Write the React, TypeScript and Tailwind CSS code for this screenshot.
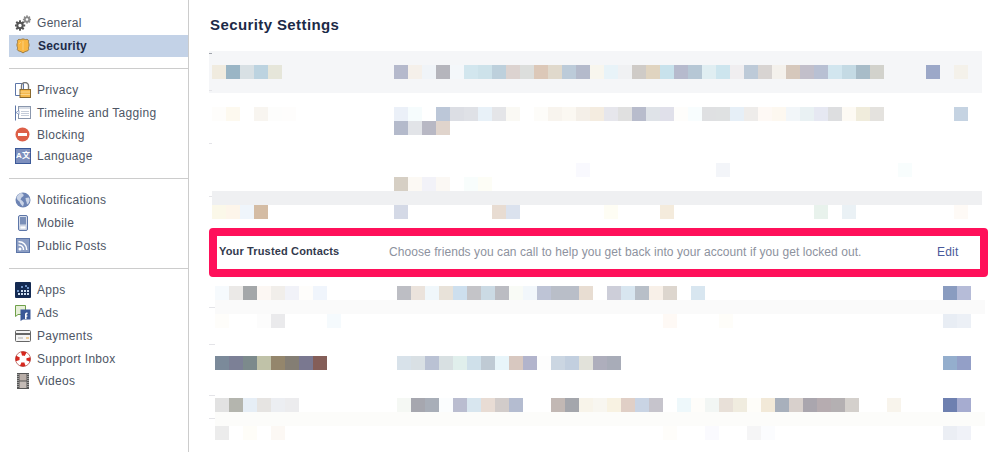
import React from 'react';

const T = '#f5f6f8';

// one 14px mosaic row: colours on the grid, "-" is an empty cell
type Row = { cells?: string; band?: string; tick?: number; tickColor?: string; full?: boolean };

const blanks = (n: number) => Array(n).fill('-').join(' ');

const topRows: Row[] = [
  { band: T, full: true, tick: 2, tickColor: '#a0a4ac' },
  {
    band: T,
    full: true,
    cells:
      'f0ebdf 9ab5c5 d8e0e4 bcd3e0 e6e6da - - - - - - - - b5b9cc f5f0ea f0f4f8 b5b5bc f4f7fa d2e6ee cde2ea bdd0dc dcd3d0 dcdedc dcc8b8 e0d9cc bccbd9 b4bacb f8f6ee e8f3f8 f0f1f3 cfcbc7 e0d4c0 c8e2ec b6bacd b6c7d5 e0eef2 cde5ee f0eef0 bdcad8 d8d4d2 f4f1ec d6c8bc c2bfca b8c0d3 d2e6ef c4dae4 a8bcc8 d2d2cc - - - 9ca8c8 - f4f1ea',
  },
  { band: T, full: true, tick: 11, tickColor: '#e4e4e8' },
  {},
  {
    cells:
      'fefdfb fdf9ef - f8f5f0 fdfdfc fefdfc - - - - - - - ebf0f8 f6fcfd - bcc7d8 dcdee4 dfe1e6 e8f1f8 e4e5e8 faf9f4 - fdfcf9 f8f4ee fbf8f2 f4efe8 f4ece0 e6e6ec e0e0e0 b8bccc dfe3e8 e0e0ea fefdfb f8fdfe dfe0e2 dfe1e2 e6eff7 eeecea fef9f5 fdf8f0 f2f6f9 e9f1f3 e6e8f2 dddee0 fdfaf4 f0ecdc e4e2de - - - - - c5d3e2',
  },
  { cells: `${blanks(13)} b4bacb e2e4e8 b8b8c4 e0d4cc` },
  { tick: 8, tickColor: '#e4e4e8' },
  {},
  { cells: `${blanks(26)} f9f9fe ${blanks(9)} f3f5f9 ${blanks(12)} f8fdfd` },
  { cells: `${blanks(13)} d6cfc4 fcf9f4 f2f2f8 fbf8f4 - f8fdfc fdfdf6` },
  { band: '#eff0f2', tick: 5, tickColor: '#e4e4e8' },
  {
    cells: `fbf8e9 fdf5ea eff5fb d4bca4 ${blanks(9)} d4d9e6 ${blanks(6)} e8dcd2 dbe2ee ${blanks(6)} fefdf4 ${blanks(3)} f4ebdc ${blanks(10)} e8f2ec - eaf1f5 ${blanks(7)} fefaf6`,
  },
];

const bottomRows: Row[] = [
  {
    cells: `f6fafd ebe9e7 a4a7a9 fcf7f3 f1eeea f1f2f8 fefdfb f0f5fc ${blanks(5)} bdbec4 ebe3dc f0f7fb e8e2d9 cddfee c4c4c8 cbdae4 bbbcc2 f9fbf6 f2f7fb bec4d6 b9bec8 b9bec8 e8ddd2 - cdced9 d8e6f0 b8bfc8 f8f0e8 ddd6ce - d8e6f0 ${blanks(17)} 8a9cc0 b6bcd8`,
  },
  { band: '#fafafa', tick: 7, tickColor: '#e4e4e8' },
  {
    cells: `fefdfa - - fcfcfc eaeaec - - - f5fafd ${blanks(23)} fef9f5 ${blanks(3)} fefdf9 ${blanks(15)} e8edf4 ecf0f6`,
  },
  {},
  { tick: 2, tickColor: '#e4e4e8' },
  {
    cells: `7b8a9a 7c8096 7c8a8c c0c2a8 94866c 847e74 7a7890 845e58 ${blanks(5)} d8e2ea d9e0e4 bac2d4 d8e0e2 e0efec cfe0ea bfcad4 e8f5fa d8c8c0 b2b4cc fdfdfd cbd6e2 c2cfdf e2e2da aeaebc a8acb8 ${blanks(23)} 94aecd 939fc7`,
  },
  {},
  { tick: 11, tickColor: '#e4e4e8' },
  {
    cells: `e2e2e2 b4b5ae e6eef6 e6e4e2 eceef2 ececee ${blanks(7)} f5f8f4 a6a7af a8aeb8 fbfdfe babdd0 d8e6ef e8dcd4 d2ccca b4bcd0 - - c2b8b4 a4a6ac f8f4ea f8f6f0 f8f2e2 e0cfc6 c9d4e4 c6c4cc - eef8fb fefdfa f2f6f4 e8e0d8 f0ecdf fefdf9 f2e9d8 a8b0bc d8d0cc aaa6ae b6acb0 b4b0b2 d4d0cc - - f8f4ec ${blanks(3)} 6e80b0 a6acd0`,
  },
  { band: '#fcfcfa', tick: 6, tickColor: '#e4e4e8' },
  {
    cells: `ececec - fefdf8 - fcf8f4 ${blanks(27)} fefdfa - - fafafe - - f5f5f6 fbfcfe ${blanks(12)} ebeef4 f0f2f8`,
  },
  {},
];

const Mosaic = ({ rows, gutter, width }: { rows: Row[]; gutter: number; width: number }) => (
  <div>
    {rows.map((row, i) => (
      <div key={i} className="flex h-[14px]">
        <div className="h-[14px]" style={{ width: gutter, background: row.full ? row.band : undefined }}>
          {row.tick !== undefined && (
            <div className="h-px" style={{ marginTop: row.tick, background: row.tickColor }} />
          )}
        </div>
        <div className="flex h-[14px]" style={{ width, background: row.band }}>
          {row.cells?.split(' ').map((c, j) => (
            <div
              key={j}
              className="h-[14px] w-[14px] shrink-0"
              style={{ background: c === '-' ? undefined : `#${c}` }}
            />
          ))}
        </div>
      </div>
    ))}
  </div>
);

const gearTeeth = (cx: number, cy: number, r: number, n: number) =>
  Array.from({ length: n }, (_, i) => {
    const a = (i / n) * Math.PI * 2;
    return { x: cx + Math.cos(a) * r, y: cy + Math.sin(a) * r, a: (a * 180) / Math.PI };
  });

const Gear = () => (
  <svg viewBox="0 0 16 16" className="h-4 w-4">
    {gearTeeth(5, 10.5, 4.2, 8).map((t, i) => (
      <rect key={i} x={t.x - 1} y={t.y - 1} width="2" height="2" fill="#555" transform={`rotate(${t.a} ${t.x} ${t.y})`} />
    ))}
    <circle cx="5" cy="10.5" r="2.7" fill="none" stroke="#555" strokeWidth="2" />
    {gearTeeth(12, 4.5, 3.3, 8).map((t, i) => (
      <rect key={i} x={t.x - 0.8} y={t.y - 0.8} width="1.6" height="1.6" fill="#8a8a8a" transform={`rotate(${t.a} ${t.x} ${t.y})`} />
    ))}
    <circle cx="12" cy="4.5" r="2.2" fill="none" stroke="#8a8a8a" strokeWidth="1.8" />
  </svg>
);

const Shield = () => (
  <svg viewBox="0 0 16 16" className="h-4 w-4">
    <path
      d="M4 1.2c1 .6 2 .5 3-.2h2c1 .7 2 .8 3 .2l1.800 1.500c-.5 1-.5 1.800 0 2.800.4 1 .4 2 0 3-.5 1-.5 2 0 2.800L12.500 13c-1.600.2-3.200.8-4.500 2-1.300-1.200-2.900-1.800-4.500-2l-1.300-1.700c.5-.8.500-1.800 0-2.800-.4-1-.4-2 0-3 .5-1 .5-1.800 0-2.800z"
      fill="#f9b743"
      stroke="#94743c"
      strokeWidth=".9"
    />
    <path d="M8 3v9M6 4.500c-1 0-1.600.6-1.600 1.500" stroke="#fbd58c" strokeWidth=".8" fill="none" />
  </svg>
);

const Lock = () => (
  <svg viewBox="0 0 16 16" className="h-4 w-4">
    <path d="M.5 1.500h8v12h-8z" fill="#fff" stroke="#5d76a8" />
    <path d="M6.500 8V4a3.500 3.500 0 0 1 7 0v4" fill="none" stroke="#777" strokeWidth="1.4" />
    <rect x="5" y="7.5" width="10.500" height="8" fill="#f5b94e" stroke="#8a6a30" />
    <path d="M5.500 10h9.500M5.500 12.500h9.500" stroke="#fbd78e" />
  </svg>
);

const Timeline = () => (
  <svg viewBox="0 0 16 16" className="h-4 w-4">
    <path d="M.5 .5v15" stroke="#5d76a8" />
    <rect x="3.5" y="1.5" width="12" height="12" fill="#fff" stroke="#8a97ad" />
    <rect x="4" y="2" width="11" height="2" fill="#d8dde6" />
    <path d="M1 7.500l3-2v4z" fill="#fff" stroke="#5d76a8" strokeWidth=".6" />
    <path d="M6 6.500h8M6 8.500h8M6 10.500h8" stroke="#c4ccd9" />
  </svg>
);

const Block = () => (
  <svg viewBox="0 0 16 16" className="h-4 w-4">
    <circle cx="7.5" cy="7.5" r="7" fill="#dd5f47" />
    <rect x="3" y="6" width="9" height="3" fill="#fff" />
  </svg>
);

const LangIcon = () => (
  <div className="flex h-4 w-4 items-center justify-center border border-[#3b5998] bg-[#7d8fbd] font-['Liberation_Sans','Noto_Sans_CJK_SC',sans-serif] text-[8px] font-bold leading-none text-white">
    A文
  </div>
);

const Globe = () => (
  <svg viewBox="0 0 16 16" className="h-4 w-4">
    <circle cx="8" cy="8" r="7.5" fill="#6d84b4" />
    <path
      d="M6 1c2 .4 3 1.500 2.500 3L6.500 5.500l-1 2 2 1.500 1.500 2-1 3.500C6 13 5 11 4.500 9.500 3 8.500 1.500 7 1.500 5.500 2.500 3 4 1.500 6 1zM10.500 6l3.500-.5c1 2 .8 4-.5 6l-1.500 1c-.2-2-.5-3-1-3.500z"
      fill="#c9d3e6"
    />
  </svg>
);

const Phone = () => (
  <svg viewBox="0 0 16 16" className="h-4 w-4">
    <rect x="3.5" y=".5" width="9" height="15" rx="1.5" fill="#d6dce9" stroke="#5d76a8" />
    <rect x="5" y="2" width="6" height="7.5" fill="#7a8fb8" />
    <rect x="5" y="11" width="6" height="3" fill="#fff" stroke="#a9b5cd" strokeWidth=".5" />
  </svg>
);

const Rss = () => (
  <svg viewBox="0 0 16 16" className="h-4 w-4">
    <rect x="1.5" y=".5" width="13" height="14" fill="#8b9dc3" stroke="#5d76a8" />
    <circle cx="5" cy="11" r="1.5" fill="#fff" />
    <path d="M3.500 7a4.500 4.500 0 0 1 5 5M3.500 3.800a7.700 7.700 0 0 1 8.200 8.200" fill="none" stroke="#fff" strokeWidth="1.5" />
  </svg>
);

const Apps = () => (
  <svg viewBox="0 0 16 16" className="h-4 w-4">
    <rect width="16" height="16" rx="1" fill="#142a52" />
    <path d="M3 11h2v2H3zM6 11h2v2H6zM9 11h2v2H9zM12 11h2v2h-2zM6 8h2v2H6zM9 8h2v2H9zM12 8h2v2h-2z" fill="#cfe0f2" />
    <path d="M6 4h2v2H6zM10 3h2v2h-2zM2 8h2v2H2zM12 5h2v2h-2z" fill="#6f93c6" />
  </svg>
);

const Ads = () => (
  <svg viewBox="0 0 16 16" className="h-4 w-4">
    <path d="M.5 .5h10v9H3l-2.500 2z" fill="#e6efd8" stroke="#6fa04a" />
    <path d="M5.500 4.500h10v10H8l-2.500 1.500z" fill="#3b5998" />
    <path d="M10 14v-4.500c0-1.500 1-2 2.500-2V9c-.6 0-1 .2-1 .8V10.500h1l-.2 1.300h-.8V14z" fill="#fff" />
  </svg>
);

const Card = () => (
  <svg viewBox="0 0 16 16" className="h-4 w-4">
    <rect x=".5" y="2.5" width="15" height="11" rx="1" fill="#f4f4f4" stroke="#666" />
    <rect x="1" y="5" width="14" height="2" fill="#666" />
    <path d="M3 10h5" stroke="#aaa" />
    <path d="M11 10h3" stroke="#e8a33d" />
  </svg>
);

const Lifebuoy = () => (
  <svg viewBox="0 0 16 16" className="h-4 w-4">
    <circle cx="8" cy="8" r="5.5" fill="none" stroke="#fff" strokeWidth="4" />
    <circle cx="8" cy="8" r="5.5" fill="none" stroke="#d8281e" strokeWidth="4" strokeDasharray="4.3 4.34" strokeDashoffset="2.2" />
    <circle cx="8" cy="8" r="7.5" fill="none" stroke="#a02018" strokeWidth=".6" />
  </svg>
);

const Film = () => (
  <svg viewBox="0 0 16 16" className="h-4 w-4">
    <rect x="2" y="0" width="12" height="16" fill="#555" />
    <rect x="4.5" y="1" width="7" height="6.5" fill="#b9aea8" />
    <rect x="4.5" y="8.5" width="7" height="6.5" fill="#c4bbb6" />
    <path d="M3 1v14M13 1v14" stroke="#ddd" strokeDasharray="1 1" />
  </svg>
);

type Item = { label: string; icon: React.ReactNode; h: string; active?: boolean };

const groups: { items: Item[]; gap: string }[] = [
  {
    gap: 'pt-[11px]',
    items: [
      { label: 'General', icon: <Gear />, h: 'h-[23px]' },
      { label: 'Security', icon: <Shield />, h: 'h-[22px] mt-px', active: true },
    ],
  },
  {
    gap: 'pt-[9px]',
    items: [
      { label: 'Privacy', icon: <Lock />, h: 'h-[23px]' },
      { label: 'Timeline and Tagging', icon: <Timeline />, h: 'h-[23px]' },
      { label: 'Blocking', icon: <Block />, h: 'h-[21px]' },
      { label: 'Language', icon: <LangIcon />, h: 'h-[21px]' },
    ],
  },
  {
    gap: 'pt-[9px]',
    items: [
      { label: 'Notifications', icon: <Globe />, h: 'h-[23px]' },
      { label: 'Mobile', icon: <Phone />, h: 'h-[23px]' },
      { label: 'Public Posts', icon: <Rss />, h: 'h-[23px]' },
    ],
  },
  {
    gap: 'pt-[9px]',
    items: [
      { label: 'Apps', icon: <Apps />, h: 'h-[23px]' },
      { label: 'Ads', icon: <Ads />, h: 'h-[23px]' },
      { label: 'Payments', icon: <Card />, h: 'h-[23px]' },
      { label: 'Support Inbox', icon: <Lifebuoy />, h: 'h-[23px]' },
      { label: 'Videos', icon: <Film />, h: 'h-[21px]' },
    ],
  },
];

const Sidebar = () => (
  <div className="h-[452px] w-[189px] shrink-0 border-r border-[#cccccc] pl-[9px]">
    {groups.map((group, i) => (
      <div key={i}>
        {i > 0 && <div className={`h-px bg-[#cccccc] ${i === 2 ? 'mt-[12px]' : 'mt-[11px]'}`} />}
        <div className={group.gap}>
          {group.items.map((item) => (
            <div
              key={item.label}
              className={`flex items-center pl-[6px] ${item.h} ${
                item.active ? 'bg-[#c3d2e7] font-bold text-[#1c2a47]' : 'text-[#4e5665]'
              }`}
            >
              <span className={`shrink-0 ${item.active ? 'mr-[7px]' : 'mr-[6px]'}`}>{item.icon}</span>
              <span className={`text-[12px] ${item.active ? 'tracking-[0.2px]' : 'tracking-[0.3px]'}`}>{item.label}</span>
            </div>
          ))}
        </div>
      </div>
    ))}
  </div>
);

const App = () => (
  <div className="flex h-[452px] w-[988px] overflow-hidden bg-white font-['Liberation_Sans',Arial,sans-serif]">
    <Sidebar />
    <div className="min-w-0 flex-1 pl-[20px]">
      <h1 className="ml-px flex h-[51px] items-center pb-px text-[15px] font-bold tracking-[0.4px] text-[#1c2a47]">
        Security Settings
      </h1>
      <Mosaic rows={topRows} gutter={3} width={770} />
      <div className="mt-[9px] flex h-[49px] w-[779px] items-center rounded-[4px] border-[8px] border-[#ff105a] pb-[2px] pl-[2px]">
        <span className="w-[170px] shrink-0 text-[11px] font-bold tracking-[0.15px] text-[#333a4d]">
          Your Trusted Contacts
        </span>
        <span className="w-[548px] shrink-0 text-[12px] tracking-[0.07px] text-[#8d929e]">
          Choose friends you can call to help you get back into your account if you get locked out.
        </span>
        <span className="text-[12px] tracking-[0.2px] text-[#4a5a9a]">Edit</span>
      </div>
      <div className="mt-[9px]">
        <Mosaic rows={bottomRows} gutter={6} width={770} />
      </div>
    </div>
  </div>
);

export default App;
